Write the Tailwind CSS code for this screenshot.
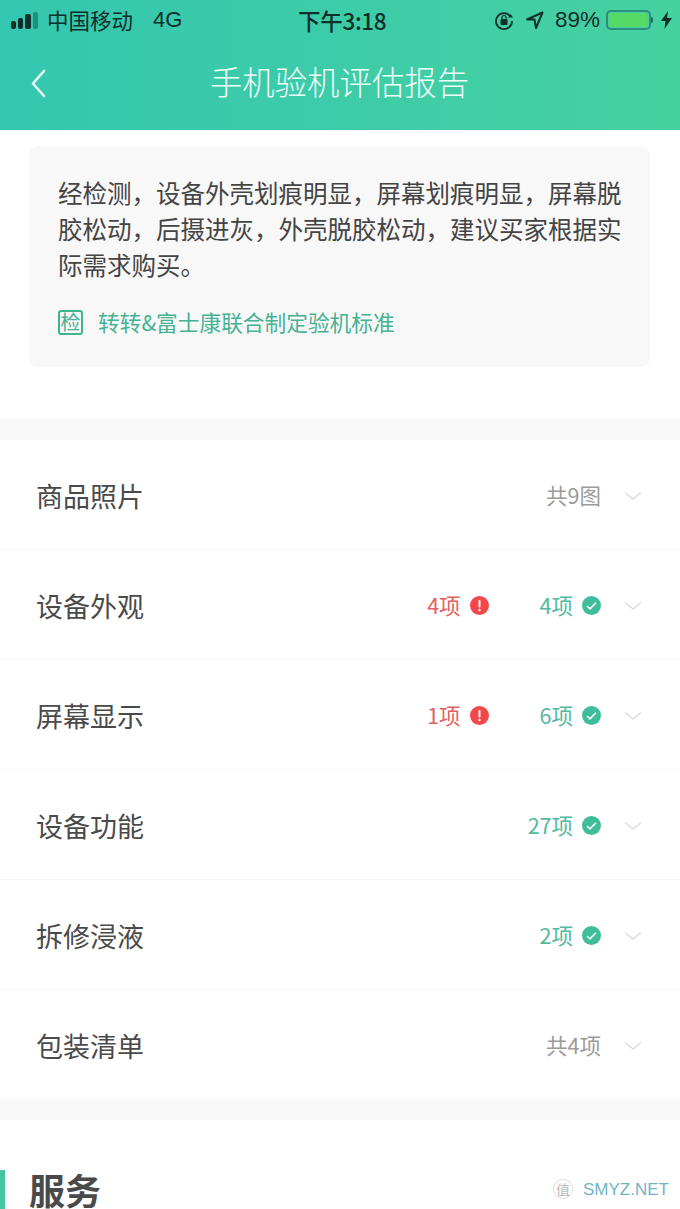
<!DOCTYPE html>
<html lang="zh">
<head>
<meta charset="utf-8">
<script src="https://cdn.jsdelivr.net/npm/@tailwindcss/browser@4"></script>
</head>
<body class="w-[680px] h-[1209px] overflow-hidden bg-white font-['Noto_Sans_CJK_SC','Noto_Sans',sans-serif] text-[#4a4a4a]">
<header class="h-[130px] bg-gradient-to-r from-[#34c7b0] to-[#46d1a0] flex flex-col">
  <div class="h-[38px] flex items-center pl-[11px] pr-[8px] text-[#123c36] relative">
    <div class="flex items-end gap-[2px] h-[18px] w-[29px] mt-[1px]">
      <span class="w-[5px] h-[8px] rounded-[2px] bg-[#0f2f2a]"></span>
      <span class="w-[5px] h-[11px] rounded-[2px] bg-[#0f2f2a]"></span>
      <span class="w-[6px] h-[15px] rounded-[2px] bg-[#0f2f2a]"></span>
      <span class="w-[5px] h-[17px] rounded-[2px] bg-[#1f8f7d]"></span>
    </div>
    <span class="ml-[7px] text-[21.500px] leading-none mt-[1px] text-[#0f2f2a]">中国移动</span>
    <span class="ml-[20px] text-[22px] leading-none font-['Liberation_Sans'] mt-[1px] text-[#0f2f2a]">4G</span>
    <span class="absolute left-[298px] top-[9px] text-[22.500px] leading-[22px] font-medium text-[#0f2f2a] tracking-[-0.3px]">下午3:18</span>
    <div class="ml-auto flex items-center mt-[1px]">
      <svg width="22" height="22" viewBox="0 0 22 22" class="mr-[10px]" fill="none" stroke="#0f2f2a">
        <path d="M17.500 7.500A8 8 0 1 0 19 12" stroke-width="1.800"/>
        <path d="M15 7.500h5l-2.400-3.600z" fill="#0f2f2a" stroke="none" transform="translate(0 1)"/>
        <rect x="7.500" y="10" width="7" height="6" rx="1" fill="#0f2f2a" stroke="none"/>
        <path d="M9 10V8.500a2 2 0 0 1 4 0V10" stroke-width="1.200"/>
      </svg>
      <svg width="20" height="20" viewBox="0 0 20 20" class="mr-[10px]" fill="none" stroke="#0f2f2a" stroke-width="2">
        <path d="M2 9.500 17.500 2.500 11 18l-1.500-8.500z" stroke-linejoin="round"/>
      </svg>
      <span class="text-[22.500px] leading-none font-['Liberation_Sans'] mr-[6px] mt-[2px] text-[#0f2f2a]">89%</span>
      <div class="w-[45px] h-[20px] rounded-[5px] border-2 border-[#2a8f7c] p-[1px]">
        <div class="h-full w-[38px] rounded-[3px] bg-[#54d964]"></div>
      </div>
      <span class="w-[2px] h-[6px] bg-[#1d6e60] rounded-r-sm mr-[8px]"></span>
      <svg width="11" height="18" viewBox="0 0 11 18" fill="#0f2f2a">
        <path d="M7 0 0 10h4.500L3.500 18 11 7H6z"/>
      </svg>
    </div>
  </div>
  <div class="flex-1 relative flex items-center justify-center">
    <svg width="18" height="30" viewBox="0 0 18 30" fill="none" stroke="#e9fbf6" stroke-width="2.600" stroke-linecap="round" stroke-linejoin="round" class="absolute left-[30px] top-[31px]">
      <path d="M14 2 3 14.500 14 27"/>
    </svg>
    <h1 class="text-[32.400px] leading-none font-light text-[#f0fcf8] mt-[-5px] ml-[-1px]">手机验机评估报告</h1>
  </div>
</header>

<section class="h-[288px] pt-[16px] px-[29px]">
  <div class="w-[621px] h-[221px] rounded-[9px] bg-[#f8f8f8] pt-[29px] pl-[29px] pr-[27px]">
    <p class="text-[24.500px] leading-[36px] text-[#444]">经检测，设备外壳划痕明显，屏幕划痕明显，屏幕脱胶松动，后摄进灰，外壳脱胶松动，建议买家根据实际需求购买。</p>
    <div class="mt-[25px] flex items-center text-[#45b293]">
      <span class="w-[25px] h-[25px] rounded-[3px] border-2 border-[#3fb48d] flex items-center justify-center text-[20px] leading-none">检</span>
      <span class="ml-[15px] text-[21.700px] leading-[28px]">转转&amp;富士康联合制定验机标准</span>
    </div>
  </div>
</section>

<div class="h-[22px] bg-[#f8f8f8]"></div>

<section class="divide-y divide-[#f6f6f6]">
  <div class="h-[110px] flex items-center pl-[36px] pr-[38px]">
    <span class="text-[27px] leading-none mt-[1px]">商品照片</span>
    <span class="ml-auto text-[21.500px] mt-[1px] text-[#9b9b9b]">共9图</span>
    <svg width="18" height="10" viewBox="0 0 18 10" fill="none" stroke="#dcdcdc" stroke-width="1.600" class="ml-[23px] mt-[2px]"><path d="M1 1.500 9 8l8-6.500"/></svg>
  </div>
  <div class="h-[110px] flex items-center pl-[36px] pr-[38px]">
    <span class="text-[27px] leading-none mt-[1px]">设备外观</span>
    <span class="ml-auto text-[21.500px] mt-[1px] text-[#e4605f]">4项</span>
    <svg width="19" height="19" viewBox="0 0 19 19" class="ml-[9px] mr-[1px] mt-[2px]"><circle cx="9.500" cy="9.500" r="9.500" fill="#f4474a"/><rect x="8.500" y="4" width="2" height="7.500" rx="1" fill="#fff"/><circle cx="9.500" cy="14" r="1.200" fill="#fff"/></svg>
    <span class="ml-[50px] text-[21.500px] mt-[1px] text-[#52b9a1]">4项</span>
    <svg width="19" height="19" viewBox="0 0 19 19" class="ml-[9px] mt-[2px]"><circle cx="9.500" cy="9.500" r="9.500" fill="#3fbd9b"/><path d="M5 10l3 2.800 6-6" fill="none" stroke="#fff" stroke-width="1.600"/></svg>
    <svg width="18" height="10" viewBox="0 0 18 10" fill="none" stroke="#dcdcdc" stroke-width="1.600" class="ml-[23px] mt-[2px]"><path d="M1 1.500 9 8l8-6.500"/></svg>
  </div>
  <div class="h-[110px] flex items-center pl-[36px] pr-[38px]">
    <span class="text-[27px] leading-none mt-[1px]">屏幕显示</span>
    <span class="ml-auto text-[21.500px] mt-[1px] text-[#e4605f]">1项</span>
    <svg width="19" height="19" viewBox="0 0 19 19" class="ml-[9px] mr-[1px] mt-[2px]"><circle cx="9.500" cy="9.500" r="9.500" fill="#f4474a"/><rect x="8.500" y="4" width="2" height="7.500" rx="1" fill="#fff"/><circle cx="9.500" cy="14" r="1.200" fill="#fff"/></svg>
    <span class="ml-[50px] text-[21.500px] mt-[1px] text-[#52b9a1]">6项</span>
    <svg width="19" height="19" viewBox="0 0 19 19" class="ml-[9px] mt-[2px]"><circle cx="9.500" cy="9.500" r="9.500" fill="#3fbd9b"/><path d="M5 10l3 2.800 6-6" fill="none" stroke="#fff" stroke-width="1.600"/></svg>
    <svg width="18" height="10" viewBox="0 0 18 10" fill="none" stroke="#dcdcdc" stroke-width="1.600" class="ml-[23px] mt-[2px]"><path d="M1 1.500 9 8l8-6.500"/></svg>
  </div>
  <div class="h-[110px] flex items-center pl-[36px] pr-[38px]">
    <span class="text-[27px] leading-none mt-[1px]">设备功能</span>
    <span class="ml-auto text-[21.500px] mt-[1px] text-[#52b9a1]">27项</span>
    <svg width="19" height="19" viewBox="0 0 19 19" class="ml-[9px] mt-[2px]"><circle cx="9.500" cy="9.500" r="9.500" fill="#3fbd9b"/><path d="M5 10l3 2.800 6-6" fill="none" stroke="#fff" stroke-width="1.600"/></svg>
    <svg width="18" height="10" viewBox="0 0 18 10" fill="none" stroke="#dcdcdc" stroke-width="1.600" class="ml-[23px] mt-[2px]"><path d="M1 1.500 9 8l8-6.500"/></svg>
  </div>
  <div class="h-[110px] flex items-center pl-[36px] pr-[38px]">
    <span class="text-[27px] leading-none mt-[1px]">拆修浸液</span>
    <span class="ml-auto text-[21.500px] mt-[1px] text-[#52b9a1]">2项</span>
    <svg width="19" height="19" viewBox="0 0 19 19" class="ml-[9px] mt-[2px]"><circle cx="9.500" cy="9.500" r="9.500" fill="#3fbd9b"/><path d="M5 10l3 2.800 6-6" fill="none" stroke="#fff" stroke-width="1.600"/></svg>
    <svg width="18" height="10" viewBox="0 0 18 10" fill="none" stroke="#dcdcdc" stroke-width="1.600" class="ml-[23px] mt-[2px]"><path d="M1 1.500 9 8l8-6.500"/></svg>
  </div>
  <div class="h-[110px] flex items-center pl-[36px] pr-[38px]">
    <span class="text-[27px] leading-none">包装清单</span>
    <span class="ml-auto text-[21.500px] mt-[1px] text-[#9b9b9b]">共4项</span>
    <svg width="18" height="10" viewBox="0 0 18 10" fill="none" stroke="#dcdcdc" stroke-width="1.600" class="ml-[23px] mt-[2px]"><path d="M1 1.500 9 8l8-6.500"/></svg>
  </div>
</section>

<div class="h-[21px] bg-[#f8f8f8] mt-[-1px]"></div>

<section class="relative pt-[50px] flex items-start">
  <span class="w-[5px] h-[39px] bg-[#45c5a3]"></span>
  <h2 class="ml-[24px] text-[36px] leading-[39px] font-bold text-[#4a4a4a]">服务</h2>
  <div class="absolute left-[553px] top-[59px] flex items-center">
    <span class="w-[20px] h-[20px] rounded-full border border-[#ddd] text-[#bbb] text-[14px] leading-[18px] text-center">值</span>
    <span class="ml-[10px] text-[17px] leading-none font-['Liberation_Sans'] text-[#6fb4c6]">SMYZ.NET</span>
  </div>
</section>
</body>
</html>
